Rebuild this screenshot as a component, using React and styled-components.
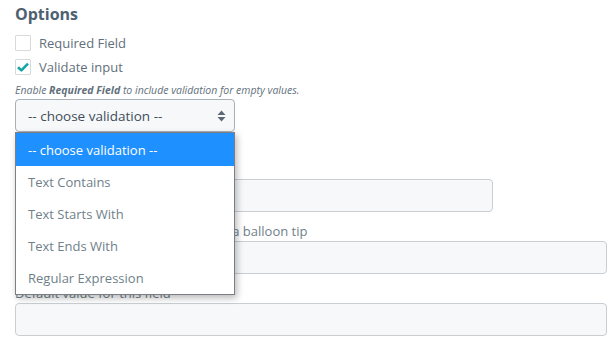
import styled, { createGlobalStyle } from 'styled-components';

// ------------------------------------ Global ----------------------------------

const GlobalStyle = createGlobalStyle`
  html, body {
    margin: 0;
    padding: 0;
    background: #ffffff;
    font-family: "Open Sans", "Liberation Sans", sans-serif;
  }
`;

const colors = {
  heading: '#4e6170',
  text: '#5f707c',
  label: '#6f7f8a',
  border: '#c9ced3',
  fieldBg: '#f7f8fa',
  teal: '#17a5a5',
  blue: '#1e90ff',
};

// ------------------------------------ Page ----------------------------------

const Page = styled.div`
  padding: 4px 15px 0;
  width: 592px;
`;

const Heading = styled.h2`
  margin: 0 0 7px;
  font-size: 16px;
  line-height: 20px;
  font-weight: 700;
  color: ${colors.heading};
`;

// ------------------------------------ Checkboxes ----------------------------------

const CheckRow = styled.label`
  display: flex;
  align-items: center;
  gap: 8px;
  height: 24px;
  font-size: 13px;
  color: ${colors.text};
`;

const Box = styled.span`
  display: flex;
  align-items: center;
  justify-content: center;
  width: 14px;
  height: 14px;
  border: 1px solid #d6dadd;
  border-radius: 1px;
  background: #ffffff;
`;

const Check = ({ checked, children }) => (
  <CheckRow>
    <Box>
      {checked && (
        <svg width="12" height="10" viewBox="0 0 12 10">
          <path d="M1 5.2 L4.4 8.4 L11 1.6" fill="none" stroke={colors.teal} strokeWidth="2.6" strokeLinejoin="round" />
        </svg>
      )}
    </Box>
    {children}
  </CheckRow>
);

const Help = styled.p`
  margin: 4px 0 2px;
  font-size: 10.5px;
  line-height: 14px;
  font-style: italic;
  color: ${colors.text};

  b {
    font-weight: 700;
  }
`;

// ------------------------------------ Select ----------------------------------

const SelectWrap = styled.div`
  position: relative;
  width: 220px;
`;

const SelectBox = styled.div`
  box-sizing: border-box;
  display: flex;
  align-items: center;
  justify-content: space-between;
  height: 33px;
  padding: 0 8px 0 12px;
  border: 1px solid #a9b0b6;
  border-radius: 4px;
  background: ${colors.fieldBg};
  font-size: 13.5px;
  color: #3f4e59;
`;

const Menu = styled.ul`
  position: absolute;
  z-index: 5;
  top: 33px;
  left: 0;
  box-sizing: border-box;
  width: 220px;
  margin: 0;
  padding: 0;
  list-style: none;
  background: #ffffff;
  border: 1px solid #7b7f83;
  box-shadow: 2px 3px 7px rgba(0, 0, 0, 0.28);
`;

const Option = styled.li`
  display: flex;
  align-items: center;
  height: ${({ $active }) => ($active ? '33px' : '32px')};
  padding-left: 12px;
  font-size: 13px;
  background: ${({ $active }) => ($active ? colors.blue : '#ffffff')};
  color: ${({ $active }) => ($active ? '#ffffff' : colors.label)};
`;

const SortIcon = () => (
  <svg width="9" height="12" viewBox="0 0 9 12">
    <path d="M4.5 0.5 L8.5 5 L0.5 5 Z M0.5 7 L8.5 7 L4.5 11.5 Z" fill="#5b6a75" />
  </svg>
);

// ------------------------------------ Fields ----------------------------------

const Field = styled.div`
  margin-top: ${({ $top }) => $top || 10}px;
`;

const Label = styled.div`
  margin-bottom: 1px;
  font-size: 13px;
  line-height: 18px;
  color: ${colors.label};
`;

const Input = styled.div`
  box-sizing: border-box;
  width: ${({ $width }) => $width || '100%'};
  height: 33px;
  border: 1px solid ${colors.border};
  border-radius: 4px;
  background: ${colors.fieldBg};
`;

// ------------------------------------ App ----------------------------------

const options = ['-- choose validation --', 'Text Contains', 'Text Starts With', 'Text Ends With', 'Regular Expression'];

export default function App() {
  return (
    <>
      <GlobalStyle />
      <Page>
        <Heading>Options</Heading>
        <Check>Required Field</Check>
        <Check checked>Validate input</Check>
        <Help>
          Enable <b>Required Field</b> to include validation for empty values.
        </Help>
        <SelectWrap>
          <SelectBox>
            -- choose validation --
            <SortIcon />
          </SelectBox>
          <Menu>
            {options.map((o, i) => (
              <Option key={o} $active={i === 0}>
                {o}
              </Option>
            ))}
          </Menu>
        </SelectWrap>
        <Field $top={28}>
          <Label>Validation value</Label>
          <Input $width="478px" />
        </Field>
        <Field $top={10}>
          <Label>Tooltip text for this field, to show in a balloon tip</Label>
          <Input />
        </Field>
        <Field $top={10}>
          <Label>Default value for this field</Label>
          <Input />
        </Field>
      </Page>
    </>
  );
}
